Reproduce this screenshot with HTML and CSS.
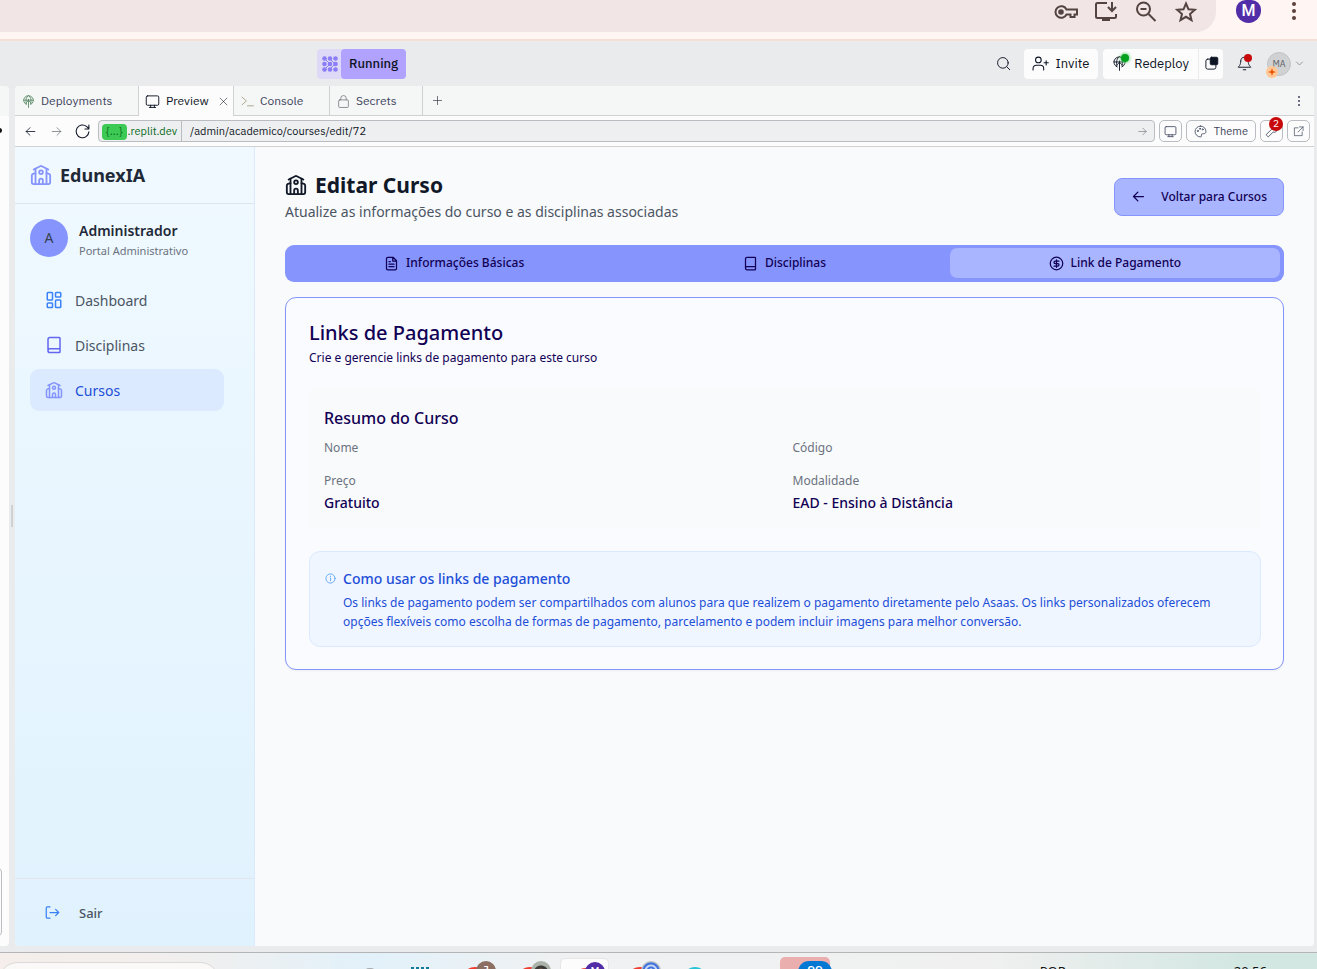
FILE: index.html
```html
<!DOCTYPE html>
<html lang="pt-BR">
<head>
<meta charset="utf-8">
<meta name="viewport" content="width=device-width, initial-scale=1">
<title>EdunexIA - Editar Curso</title>
<link rel="stylesheet" href="styles.css">
</head>
<body>
<svg class="sprite" aria-hidden="true">
  <symbol id="school" viewBox="0 0 24 24"><path d="M14 22v-4a2 2 0 1 0-4 0v4"/><path d="m18 10 2.800 .8a2 2 0 0 1 1.200 1.800V20a2 2 0 0 1-2 2H4a2 2 0 0 1-2-2v-7.400a2 2 0 0 1 1.200-1.800L6 10"/><path d="M18 5v17"/><path d="m4 6 7.106-3.553a2 2 0 0 1 1.788 0L20 6"/><path d="M6 5v17"/><circle cx="12" cy="9" r="2"/></symbol>
  <symbol id="book" viewBox="0 0 24 24"><path d="M4 19.500v-15A2.500 2.500 0 0 1 6.500 2H19a1 1 0 0 1 1 1v18a1 1 0 0 1-1 1H6.500a1 1 0 0 1 0-5H20"/></symbol>
  <symbol id="monitor" viewBox="0 0 24 24"><rect x="2" y="3" width="20" height="15" rx="2"/><path d="M7 21.500h10M9 18v3M15 18v3"/></symbol>
  <symbol id="globe" viewBox="0 0 24 24"><path d="M8 17.500a9 8.500 0 1 1 8 0M3 9.500h18M12 8v15M8 14l4-4 4 4M8 16C6 10 8 3 12 1c4 2 6 9 4 15"/></symbol>
  <symbol id="left" viewBox="0 0 24 24"><path d="m11 19-7-7 7-7M4 12h16"/></symbol>
  <symbol id="right" viewBox="0 0 24 24"><path d="m13 5 7 7-7 7M20 12H4"/></symbol>
</svg>

<header class="chrome">
  <div class="omnibox">
    <svg class="chrome-icon" viewBox="0 0 24 24"><path d="M12.500 9.500H23v5h-2.500V17h-4v-2.500h-4a5.800 5.800 0 1 1 0-5z"/><circle cx="7" cy="12" r="1.800" fill="currentColor"/></svg>
    <svg class="chrome-icon" viewBox="0 0 24 24"><path d="M13 3H3.500A1.500 1.500 0 0 0 2 4.500v12A1.500 1.500 0 0 0 3.500 18h17a1.500 1.500 0 0 0 1.500-1.500V14M18 2v9m-4-4 4 4 4-4M8 20h8"/></svg>
    <svg class="chrome-icon" viewBox="0 0 24 24"><circle cx="9.500" cy="9" r="6.500"/><path d="m14.500 14 7 7M6.500 9h6"/></svg>
    <svg class="chrome-icon" viewBox="0 0 24 24"><path d="m12 3.500 2.500 5.800 6.300.5-4.800 4.200 1.500 6.200-5.500-3.400-5.500 3.400 1.500-6.200-4.800-4.200 6.300-.5z"/></svg>
  </div>
  <span class="profile">M</span>
  <svg class="chrome-dots" viewBox="0 0 6 20"><circle cx="3" cy="3" r="2"/><circle cx="3" cy="10" r="2"/><circle cx="3" cy="17" r="2"/></svg>
</header>

<div class="ide-bar">
  <button class="running"><span class="running-mark"><svg viewBox="0 0 16 16"><g><circle cx="2.500" cy="2.500" r="2.300"/><circle cx="8" cy="2.500" r="2.300"/><circle cx="13.500" cy="2.500" r="2.300"/><circle cx="2.500" cy="8" r="2.300"/><circle cx="8" cy="8" r="2.300"/><circle cx="13.500" cy="8" r="2.300"/><circle cx="2.500" cy="13.500" r="2.300"/><circle cx="8" cy="13.500" r="2.300"/><circle cx="13.500" cy="13.500" r="2.300"/></g><path d="m3 3 5 5-5 5M8 3l5 5-5 5" /></svg></span><span class="running-label">Running</span></button>
  <div class="ide-actions">
    <button class="bare" aria-label="Search"><svg class="i15" viewBox="0 0 24 24"><circle cx="11" cy="11" r="8.500"/><path d="m17.500 17.500 4.500 4.500"/></svg></button>
    <button class="white-btn"><svg class="i17" viewBox="0 0 24 24"><circle cx="9" cy="7" r="4"/><path d="M1.500 21v-2a4.500 4.500 0 0 1 4.500-4.500h6a4.500 4.500 0 0 1 4.500 4.500v2M20 8v6M17 11h6"/></svg>Invite</button>
    <div class="deploy">
      <button class="white-btn"><span class="badge-host"><svg class="i15"><use href="#globe"/></svg><i class="dot-green"></i></span>Redeploy</button>
      <button class="white-btn slim" aria-label="Layout"><svg class="i15" viewBox="0 0 24 24"><rect x="3" y="5" width="16" height="16" rx="3"/><rect x="10" y="2" width="12" height="12" rx="2" fill="currentColor"/></svg></button>
    </div>
    <button class="bare bell" aria-label="Notifications"><span class="badge-host"><svg class="i15" viewBox="0 0 24 24"><path d="M6 8a6 6 0 0 1 12 0c0 7 3 8 4 10H2c1-2 4-3 4-10M10 22h4"/></svg><i class="dot-red"></i></span></button>
    <button class="account"><span class="avatar-ma">MA<svg class="spark" viewBox="0 0 12 12"><circle cx="6" cy="6" r="6" fill="#ffc896"/><path d="M6 2 7 5l3 1-3 1-1 3-1-3-3-1 3-1z" fill="#ec5300"/></svg></span><svg class="i9" viewBox="0 0 24 24"><path d="m4 8 8 8 8-8"/></svg></button>
  </div>
</div>

<div class="workspace">
  <div class="left-pane"><span class="peek-dot"></span><span class="peek-box"></span></div>
  <div class="gutter"><span></span></div>
  <main class="pane">
    <nav class="tabs-ide">
      <a href="#" class="ide-tab t1"><svg class="i13 green"><use href="#globe"/></svg>Deployments</a>
      <a href="#" class="ide-tab t2 current"><svg class="i15"><use href="#monitor"/></svg>Preview<svg class="i9 close" viewBox="0 0 24 24"><path d="m3 3 18 18M21 3 3 21"/></svg></a>
      <a href="#" class="ide-tab t3"><svg class="i13 sand" viewBox="0 0 24 24"><path d="m2 4 8 7-8 7M12 20h11"/></svg>Console</a>
      <a href="#" class="ide-tab t4"><svg class="i13 gray" viewBox="0 0 24 24"><rect x="3" y="9" width="18" height="14" rx="2"/><path d="M7 9V6a5 5 0 0 1 10 0v3"/></svg>Secrets</a>
      <button class="bare plus" aria-label="New tab"><svg class="i9" viewBox="0 0 24 24"><path d="M12 1v22M1 12h22"/></svg></button>
      <button class="bare more" aria-label="More"><svg class="dots" viewBox="0 0 4 12"><circle cx="2" cy="2" r="1"/><circle cx="2" cy="6" r="1"/><circle cx="2" cy="10" r="1"/></svg></button>
    </nav>
    <div class="address-row">
      <button class="bare" aria-label="Back"><svg class="i13"><use href="#left"/></svg></button>
      <button class="bare gray" aria-label="Forward"><svg class="i13"><use href="#right"/></svg></button>
      <button class="bare" aria-label="Reload"><svg class="i17" viewBox="0 0 24 24"><path d="M21 12.500a9 9 0 1 1-3-7.500l3 3M21 3v5.500h-5.500"/></svg></button>
      <div class="address">
        <span class="host"><b>{...}</b>.replit.dev</span>
        <input type="text" aria-label="Path" value="/admin/academico/courses/edit/72">
        <svg class="i11 gray"><use href="#right"/></svg>
      </div>
      <button class="outline sq" aria-label="Device"><svg class="i13"><use href="#monitor"/></svg></button>
      <button class="outline theme"><svg class="i13" viewBox="0 0 24 24"><path d="M12 2a10 10 0 1 0 0 20c3 0 1-3 2-5s8 1 8-5c0-6-4.500-10-10-10z"/><circle cx="7" cy="11" r="1"/><circle cx="11" cy="7" r="1"/><circle cx="16" cy="8" r="1"/></svg>Theme</button>
      <button class="outline sq" aria-label="Tools"><svg class="i13" viewBox="0 0 24 24"><path d="M15 7a5 5 0 0 1 7-4l-4 4 3 3 2-3a6 6 0 0 1-8 6l-9 9-4-4 9-9z"/></svg><i class="count">2</i></button>
      <button class="outline sq" aria-label="Open"><svg class="i11" viewBox="0 0 24 24"><path d="M11 4H3v17h17v-8M14 2h8v8M22 2 11 13"/></svg></button>
    </div>

    <div class="app">
      <aside class="sidebar">
        <div class="brand"><svg class="i22"><use href="#school"/></svg>EdunexIA</div>
        <div class="user"><span class="user-avatar">A</span><div><strong>Administrador</strong><small>Portal Administrativo</small></div></div>
        <nav class="menu">
          <a href="#"><svg class="i18 blue" viewBox="0 0 24 24"><rect x="3" y="2" width="7" height="10" rx="1"/><rect x="14" y="2" width="7" height="6" rx="1"/><rect x="14" y="12" width="7" height="10" rx="1"/><rect x="3" y="16" width="7" height="6" rx="1"/></svg>Dashboard</a>
          <a href="#"><svg class="i18 indigo"><use href="#book"/></svg>Disciplinas</a>
          <a href="#" class="active"><svg class="i18 lilac"><use href="#school"/></svg>Cursos</a>
        </nav>
        <div class="logout"><a href="#"><svg class="i15 blue" viewBox="0 0 24 24"><path d="M8 3H4a2 2 0 0 0-2 2v14a2 2 0 0 0 2 2h4M8 12h14M17 7l5 5-5 5"/></svg>Sair</a></div>
      </aside>

      <section class="content">
        <header class="page-head">
          <div>
            <h1><svg class="i22"><use href="#school"/></svg>Editar Curso</h1>
            <p>Atualize as informações do curso e as disciplinas associadas</p>
          </div>
          <button class="back"><svg class="i15"><use href="#left"/></svg>Voltar para Cursos</button>
        </header>
        <div class="tabs" role="tablist">
          <button role="tab"><svg class="i15" viewBox="0 0 24 24"><path d="M14.500 2H6a2 2 0 0 0-2 2v16a2 2 0 0 0 2 2h12a2 2 0 0 0 2-2V7.500zM14 2v6h6M16 13H8M16 17H8M10 9H8"/></svg>Informações Básicas</button>
          <button role="tab"><svg class="i15"><use href="#book"/></svg>Disciplinas</button>
          <button role="tab" class="selected" aria-selected="true"><svg class="i15" viewBox="0 0 24 24"><circle cx="12" cy="12" r="10"/><path d="M16 8h-6a2 2 0 1 0 0 4h4a2 2 0 1 1 0 4H8M12 18V6"/></svg>Link de Pagamento</button>
        </div>
        <article class="card">
          <h2>Links de Pagamento</h2>
          <p class="lead">Crie e gerencie links de pagamento para este curso</p>
          <section class="summary">
            <h3>Resumo do Curso</h3>
            <dl>
              <div><dt>Nome</dt><dd></dd></div>
              <div><dt>Código</dt><dd></dd></div>
              <div><dt>Preço</dt><dd>Gratuito</dd></div>
              <div><dt>Modalidade</dt><dd>EAD - Ensino à Distância</dd></div>
            </dl>
          </section>
          <section class="info">
            <svg class="i11" viewBox="0 0 24 24"><circle cx="12" cy="12" r="10"/><path d="M12 17v-6M12 7v1"/></svg>
            <div>
              <h4>Como usar os links de pagamento</h4>
              <p>Os links de pagamento podem ser compartilhados com alunos para que realizem o pagamento diretamente pelo Asaas. Os links personalizados oferecem opções flexíveis como escolha de formas de pagamento, parcelamento e podem incluir imagens para melhor conversão.</p>
            </div>
          </section>
        </article>
      </section>
    </div>
  </main>
</div>

<footer class="taskbar">
  <div class="search"></div>
  <div class="apps">
    <i class="app-gray"></i>
    <i class="app-teal"></i>
    <span class="browser"><b class="b-brown">J</b></span>
    <span class="browser"><b class="b-photo"></b></span>
    <span class="browser open"><b class="b-purple">M</b></span>
    <span class="browser"><b class="b-blue"></b></span>
    <i class="app-edge"></i>
    <span class="alert"><b>99</b></span>
  </div>
  <div class="tray"><span>POR</span><span>20:56</span></div>
</footer>
</body>
</html>
```
FILE: styles.css
```css
* { box-sizing: border-box; }
html, body { height: 100%; }
body {
  margin: 0;
  display: flex;
  flex-direction: column;
  overflow: hidden;
  background: #eaebec;
  color: #0e1525;
  font: 12px/16px "IBM Plex Sans", Inter, "Liberation Sans", sans-serif;
}
h1, h2, h3, h4, p, dl, dd { margin: 0; }
a { color: inherit; text-decoration: none; }
i { font-style: normal; }
button { margin: 0; padding: 0; border: 0; background: none; color: inherit; font: inherit; cursor: pointer; display: flex; align-items: center; justify-content: center; }
svg { flex: none; display: block; fill: none; stroke: currentColor; stroke-width: 2; stroke-linecap: round; stroke-linejoin: round; }
.sprite { position: absolute; width: 0; height: 0; }
.i9 { width: 9px; height: 9px; }
.i11 { width: 11px; height: 11px; }
.i13 { width: 13px; height: 13px; }
.i15 { width: 15px; height: 15px; }
.i17 { width: 17px; height: 17px; }
.i18 { width: 18px; height: 18px; }
.i22 { width: 22px; height: 22px; }

/* Browser strip */
.chrome { flex: none; height: 41px; display: flex; align-items: flex-start; background: #fff6f4; border-bottom: 2px solid #f5ded6; }
.omnibox { flex: 1; height: 32px; display: flex; justify-content: flex-end; gap: 16px; padding-right: 18px; background: #f1e6e5; border-radius: 0 0 20px 0; color: #534341; }
.chrome-icon { width: 24px; height: 24px; stroke-linecap: butt; stroke-linejoin: miter; }
.profile { width: 25px; height: 23px; margin: 0 30px 0 20px; border-radius: 10px 10px 13px 13px; background: #522da8; color: #fff; font: 500 16px/22px Roboto, sans-serif; text-align: center; }
.chrome-dots { width: 6px; height: 20px; margin: 1px 20px 0 0; fill: #5d3f3b; stroke: none; }

/* IDE header */
.ide-bar { flex: none; height: 45px; display: grid; grid-template-columns: 1fr auto; align-items: center; padding-right: 13px; }
.running { justify-self: start; margin-left: 317px; border-radius: 4px; background: #dfd9f8; height: 30px; }
.running-mark { width: 24px; padding-left: 2px; display: grid; place-items: center; }
.running-mark svg { width: 16px; height: 16px; fill: #8b7df5; stroke: #8b7df5; stroke-width: 0; }
.running-mark path { fill: none; stroke-width: 1; }
.running-label { padding: 0 8px; border-radius: 4px; background: #b1a2ff; font-size: 13px; line-height: 30px; font-weight: 500; }
.ide-actions { display: flex; align-items: center; font-size: 13px; }
.ide-actions svg { stroke-width: 1.5; }
.white-btn { height: 30px; gap: 7px; padding: 0 9px 0 8px; background: #fcfcfc; border-radius: 4px; }
.ide-actions > .white-btn { margin: 0 5px 0 13px; }
.deploy { display: flex; gap: 1px; }
.deploy .white-btn { padding: 0 9px; border-radius: 4px 0 0 4px; }
.deploy .slim { padding: 0 4px 0 5px; border-radius: 0 4px 4px 0; }
.badge-host { position: relative; display: block; }
.dot-green, .dot-red { position: absolute; width: 8px; height: 8px; top: -2px; right: 0; border-radius: 50%; background: #c80a0a; }
.dot-green { right: -2px; background: #00a11d; box-shadow: 0 0 3px 1px #7ed98c; }
.bell { margin: 0 15px 0 14px; }
.account { gap: 4px; color: #5c5f66; }
.avatar-ma { position: relative; width: 24px; height: 24px; border-radius: 50%; background: #d0d1d2; border: 1px solid #c2c4c6; font-size: 9px; line-height: 22px; }
.ide-actions .spark { position: absolute; left: -2px; bottom: -3px; width: 12px; height: 12px; stroke: none; }

/* Workspace */
.workspace { flex: 1; min-height: 0; display: flex; padding-right: 3px; }
.left-pane { position: relative; width: 9px; background: #fcfcfc; border-radius: 0 4px 4px 0; border-top: 30px solid #f5f6f6; overflow: hidden; }
.peek-dot { position: absolute; left: -3px; top: 12px; width: 5px; height: 5px; border-radius: 50%; background: #111; }
.peek-box { position: absolute; left: -6px; bottom: 10px; width: 8px; height: 68px; border: 1px solid #b9bcc0; border-radius: 4px; }
.gutter { width: 6px; display: flex; align-items: center; justify-content: center; }
.gutter span { width: 2px; height: 22px; background: #cfd1d3; }
.pane { flex: 1; min-width: 0; display: flex; flex-direction: column; background: #fcfcfc; border-radius: 4px; overflow: hidden; }
.tabs-ide { flex: none; height: 30px; display: flex; background: #f5f6f6; border-bottom: 1px solid #cfd1d3; font-size: 12px; }
.tabs-ide svg { stroke-width: 1.500; }
.ide-tab { height: 30px; display: flex; align-items: center; gap: 6px; padding: 0 7px; border-right: 1px solid #cfd1d3; color: #3c445c; }
.t1 { width: 124px; }
.t2 { width: 95px; padding-left: 6px; }
.t3 { width: 96px; }
.t4 { width: 93px; }
.current { background: #fcfcfc; color: #0e1525; }
.close { margin-left: auto; margin-right: -2px; }
.green { color: #4c8059; }
.sand { color: #a29a7a; }
.gray { color: #777c84; }
.plus { width: 29px; }
.more { margin-left: auto; width: 30px; }
.tabs-ide .dots { width: 4px; height: 12px; fill: #3c445c; stroke: none; }
.address-row { flex: none; height: 31px; display: flex; align-items: center; gap: 4px; padding: 0 4px; border-bottom: 1px solid #cfd1d3; }
.address-row > .bare { width: 22px; }
.address-row svg { stroke-width: 1.500; }
.address { flex: 1; height: 22px; margin-left: 1px; display: flex; align-items: center; padding-right: 6px; border: 1px solid #b9bcc0; border-radius: 4px; background: #eeeff0; font-size: 11px; }
.host { height: 20px; padding: 0 4px 0 3px; border-right: 1px solid #b9bcc0; color: #0a6b1d; line-height: 20px; }
.host b { display: inline-block; height: 16px; margin-right: 1px; padding: 0 4px; border-radius: 4px; background: #3cc954; font-weight: 400; line-height: 15px; }
.address input { flex: 1; min-width: 0; height: 20px; padding: 0 8px; border: 0; background: none; color: #0e1525; font: inherit; }
.outline { position: relative; height: 22px; border: 1px solid #b9bcc0; border-radius: 5px; background: #fcfcfc; color: #3c445c; font-size: 11px; }
.sq { width: 23px; }
.theme { gap: 7px; padding: 0 7px; }
.count { position: absolute; top: -4px; right: -1px; width: 14px; height: 14px; border-radius: 50%; background: #c80a0a; color: #fff; font-size: 10px; line-height: 14px; }

/* Application */
.app { flex: 1; min-height: 0; display: flex; background: #f9fafc; font-family: "Segoe UI", "Noto Sans", "Open Sans", sans-serif; }
.sidebar { width: 240px; display: flex; flex-direction: column; border-right: 1px solid #dbeafe; background: linear-gradient(#f0f9ff, #e0f2fe); color: #4b5563; }
.brand { height: 57px; display: flex; align-items: center; gap: 8px; padding: 0 15px; border-bottom: 1px solid #dfe5ee; color: #1f2937; font-size: 18px; font-weight: 700; }
.brand svg, .lilac { color: #8595fd; }
.user { display: flex; align-items: flex-start; gap: 11px; padding: 15px 15px 13px; color: #1f2937; }
.user-avatar { width: 38px; height: 38px; border-radius: 50%; background: #8595fd; color: #374151; font-size: 14px; line-height: 38px; text-align: center; }
.user strong, .user small { display: block; }
.user strong { font-size: 14px; line-height: 23px; font-weight: 600; }
.user small { color: #6b7280; font-size: 11px; line-height: 17px; }
.menu { display: flex; flex-direction: column; gap: 3px; padding: 7px 30px 0 15px; font-size: 14px; }
.menu a { height: 42px; display: flex; align-items: center; gap: 12px; padding: 0 15px; border-radius: 9px; line-height: 19px; }
.menu .active { background: #dbeafe; color: #1d4ed8; }
.blue { color: #3b82f6; }
.indigo { color: #6366f1; }
.logout { margin-top: auto; padding: 15px; border-top: 1px solid #e2e5ee; }
.logout a { height: 37px; display: flex; align-items: center; gap: 19px; padding: 0 15px; font-size: 13px; font-weight: 500; }
.content { flex: 1; min-width: 0; padding: 23px 30px 30px; color: #110054; }
.page-head { display: flex; align-items: center; justify-content: space-between; margin-bottom: 22px; }
.page-head h1 { display: flex; align-items: center; gap: 8px; color: #111827; font-size: 21px; line-height: 30px; font-weight: 700; }
.page-head p { color: #4b5563; font-size: 14px; line-height: 23px; }
.back { height: 38px; gap: 15px; padding: 0 16px; border: 1px solid #8595fd; border-radius: 8px; background: #a9b5ff; font-size: 12px; line-height: 18px; font-weight: 500; }
.tabs { display: grid; grid-template-columns: repeat(3, 1fr); padding: 3px 4px 4px; border-radius: 9px; background: #8595fd; }
.tabs button { height: 30px; gap: 7px; border-radius: 7px; font-size: 12px; line-height: 18px; font-weight: 500; }
.tabs .selected { background: #a9b5ff; }
.card { margin-top: 15px; padding: 22px 22px 22px 23px; border: 1px solid #8595fd; border-radius: 11px; background: #fafbff; box-shadow: 0 1px 2px #0000000d; }
.card h2 { font-size: 20px; line-height: 26px; font-weight: 500; }
.lead { font-size: 12px; line-height: 20px; }
.card .lead { margin-top: 2px; }
.summary { margin-top: 20px; padding: 18px 15px 15px; border-radius: 8px; background: #f9fafb; }
.summary h3 { font-size: 16px; line-height: 24px; font-weight: 500; }
.summary dl { display: grid; grid-template-columns: 1fr 1fr; gap: 13px 15px; margin-top: 8px; }
.summary dt { color: #6b7280; font-size: 12px; line-height: 20px; }
.summary dd { font-size: 14px; line-height: 23px; font-weight: 500; }
.info { display: flex; gap: 7px; margin-top: 22px; padding: 15px; border: 1px solid #dbeafe; border-radius: 11px; background: #eff6ff; color: #1d4ed8; }
.info svg { margin-top: 6px; color: #60a5fa; }
.info h4 { font-size: 14px; line-height: 24px; font-weight: 500; }
.info p { font-size: 12px; line-height: 19px; margin-top: 2px; }

/* Taskbar, cut by the window's lower edge */
.taskbar { flex: none; height: 17px; margin-top: 6px; display: flex; overflow: hidden; border-top: 1px solid #b3b5b7; background: linear-gradient(90deg, #f5eeea 0, #f1efee 14%, #e2f1fa 28%, #eff1f2 42%, #f0f0f0 75%, #d3e7e2 94%); }
.search { flex: none; width: 222px; height: 40px; margin: 9px 0 0 -2px; border: 1px solid #dcd9d8; border-radius: 20px; background: #fbf9f8; }
.apps { flex: none; display: flex; align-items: flex-start; margin-left: 145px; }
.app-gray { width: 10px; height: 8px; margin-top: 15px; border-radius: 5px; background: #a7adb2; }
.app-teal { width: 20px; height: 4px; margin: 14px 16px 0 36px; background: repeating-linear-gradient(90deg, #117c98 0 3px, transparent 3px 5px); }
.browser { position: relative; width: 49px; height: 30px; margin: 5px 3px 0; border-radius: 5px 5px 0 0; overflow: hidden; }
.browser::before { content: ""; position: absolute; left: 11px; top: 9px; width: 28px; height: 28px; border-radius: 50%; background: #f03a2e; }
.browser b { position: absolute; right: 3px; top: 3px; width: 20px; height: 20px; border-radius: 50%; color: #fff; font-size: 11px; font-weight: 500; line-height: 18px; text-align: center; }
.open { background: #fcfcfc; border: 1px solid #e6e6e6; }
.b-brown { background: #8d6e63; }
.b-photo { background: radial-gradient(circle at 50% 60%, #8b5f50 0 4px, #3b3a39 5px 7px, #aab2aa 8px); }
.b-purple { background: #522da8; }
.b-blue { background: radial-gradient(circle, #fff 0 2px, #3d71dc 3px 4px, #c3d4f5 5px 6px, #3d71dc 7px 8px, #b8bdc6 9px); }
.app-edge { width: 24px; height: 24px; margin: 14px 73px 0 16px; border-radius: 50%; background: #27c4d8; }
.alert { position: relative; width: 50px; height: 30px; margin-top: 4px; border-radius: 5px 5px 0 0; background: #e9aead; }
.alert b { position: absolute; left: 18px; top: 4px; width: 34px; height: 22px; border-radius: 11px; background: #0078d4; color: #fff; font-size: 13px; font-weight: 500; line-height: 20px; text-align: center; }
.tray { margin-left: auto; display: flex; gap: 168px; padding: 10px 50px 0 0; color: #111; font-family: "Noto Sans", sans-serif; font-size: 13px; }
```
